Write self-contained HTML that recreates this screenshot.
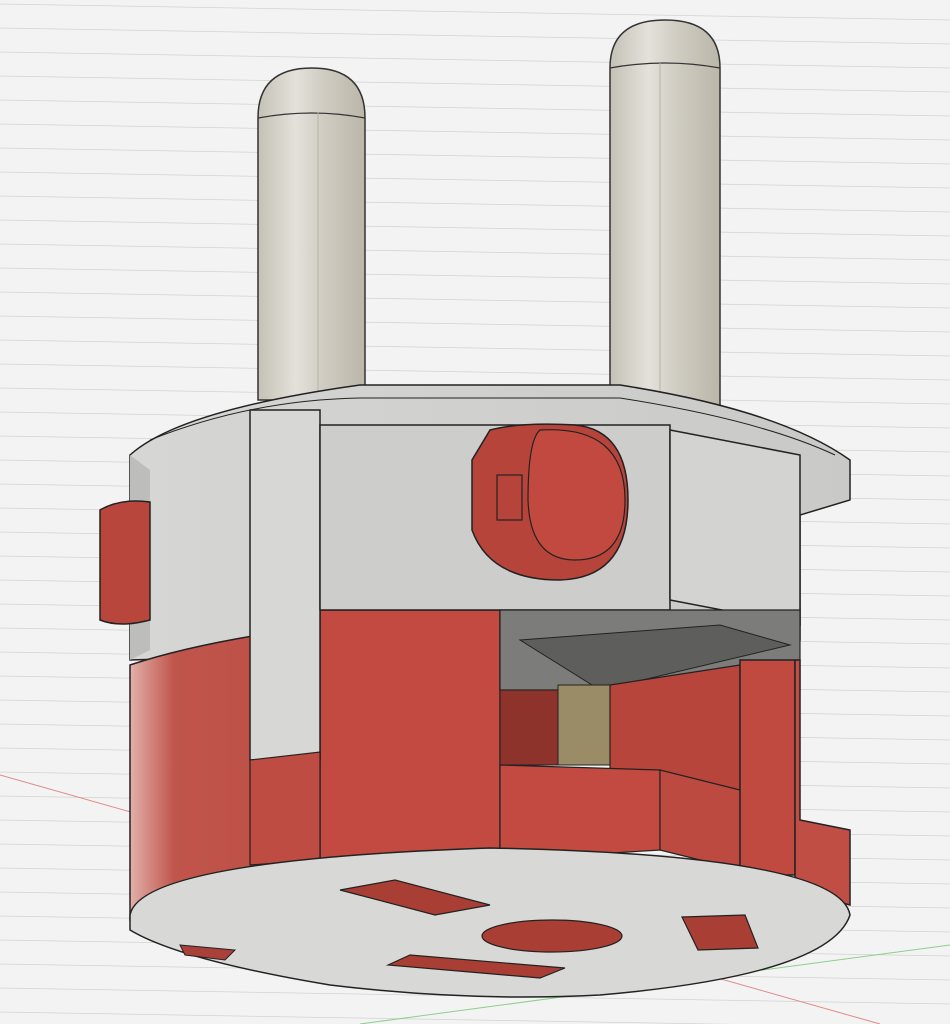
<!DOCTYPE html>
<html><head><meta charset="utf-8"><style>html,body{margin:0;padding:0;background:#f2f2f2}svg{display:block}</style></head>
<body>
<svg width="950" height="1024" viewBox="0 0 950 1024" xmlns="http://www.w3.org/2000/svg">
<defs>
<linearGradient id="pin" x1="0" x2="1"><stop offset="0" stop-color="#c4c1b6"/><stop offset="0.35" stop-color="#e3e1da"/><stop offset="0.6" stop-color="#d0cdc3"/><stop offset="1" stop-color="#bab6a8"/></linearGradient>
<linearGradient id="red" x1="0" x2="1"><stop offset="0" stop-color="#e2b0aa"/><stop offset="0.12" stop-color="#c0554b"/><stop offset="1" stop-color="#b8453c"/></linearGradient>
<linearGradient id="gray" x1="0" x2="1"><stop offset="0" stop-color="#d6d6d4"/><stop offset="1" stop-color="#c9c9c7"/></linearGradient>
<pattern id="lines" width="950" height="24" patternUnits="userSpaceOnUse"><path d="M0 4 L950 20" stroke="#d2d2d2" stroke-width="0.8" fill="none"/></pattern>
</defs>
<rect width="950" height="1024" fill="#f3f3f3"/>
<rect width="950" height="1024" fill="url(#lines)"/>
<line x1="0" y1="775" x2="880" y2="1024" stroke="#e08a8a" stroke-width="1"/>
<line x1="360" y1="1024" x2="950" y2="945" stroke="#8ccf8c" stroke-width="1"/>
<!-- pins -->
<path d="M258 118 Q258 68 312 68 Q365 68 365 118 L365 400 L258 400Z" fill="url(#pin)" stroke="#333" stroke-width="1.5"/>
<path d="M258 118 Q312 108 365 118" fill="none" stroke="#333" stroke-width="1.2"/>
<line x1="318" y1="112" x2="318" y2="395" stroke="#b8b4a6" stroke-width="1"/>
<path d="M610 68 Q610 20 665 20 Q720 20 720 68 L720 415 L610 415Z" fill="url(#pin)" stroke="#333" stroke-width="1.5"/>
<path d="M610 68 Q665 58 720 68" fill="none" stroke="#333" stroke-width="1.2"/>
<line x1="660" y1="63" x2="660" y2="410" stroke="#b8b4a6" stroke-width="1"/>
<!-- upper gray body -->
<path d="M130 455 Q180 410 360 385 L620 385 Q780 410 850 460 L850 500 L800 515 L800 640 L130 660Z" fill="url(#gray)" stroke="#222" stroke-width="1.5"/>
<path d="M150 440 Q250 400 360 398 L620 398 Q760 420 835 455" fill="none" stroke="#222" stroke-width="1"/>
<path d="M130 455 L130 660 L150 650 L150 470Z" fill="#bdbdbb"/>
<!-- red lower body -->
<path d="M130 665 Q250 625 500 610 L500 900 L130 920Z" fill="url(#red)" stroke="#222" stroke-width="1.5"/>
<rect x="320" y="610" width="180" height="250" fill="#c24a40" stroke="#222" stroke-width="1.5"/>
<!-- pillar -->
<rect x="250" y="410" width="70" height="350" fill="#d7d7d5" stroke="#222" stroke-width="1.5"/>
<path d="M250 760 L320 752 L320 860 L250 865Z" fill="#bf4c42" stroke="#222" stroke-width="1.2"/>
<!-- center panel -->
<rect x="320" y="425" width="350" height="185" fill="#cdcdcb" stroke="#222" stroke-width="1.5"/>
<!-- right box -->
<path d="M670 430 L800 455 L800 625 L670 600Z" fill="#d3d3d1" stroke="#222" stroke-width="1.5"/>
<!-- cutout -->
<path d="M500 610 L800 610 L800 690 L500 690Z" fill="#7c7c7a" stroke="#222" stroke-width="1.2"/>
<path d="M520 640 L720 625 L790 645 L600 690Z" fill="#5e5e5c" stroke="#222" stroke-width="1"/>
<rect x="500" y="690" width="60" height="75" fill="#8e332c" stroke="#222" stroke-width="1"/>
<rect x="558" y="685" width="52" height="80" fill="#9a8c66" stroke="#222" stroke-width="1"/>
<path d="M610 685 L740 665 L740 790 L610 770Z" fill="#b8453c" stroke="#222" stroke-width="1.2"/>
<path d="M500 765 L660 770 L660 850 L500 860Z" fill="#c24a40" stroke="#222" stroke-width="1.2"/>
<path d="M660 770 L740 790 L740 870 L660 850Z" fill="#bc4a41" stroke="#222" stroke-width="1.2"/>
<rect x="740" y="660" width="55" height="215" fill="#c04a40" stroke="#222" stroke-width="1.5"/>
<path d="M795 660 L800 660 L800 820 L850 830 L850 905 L795 890Z" fill="#c04e44" stroke="#222" stroke-width="1.5"/>
<!-- buttons -->
<path d="M490 430 Q520 422 575 425 Q628 430 628 500 Q628 578 560 580 Q490 580 472 530 L472 460Z" fill="#b7443b" stroke="#222" stroke-width="1.5"/>
<path d="M540 430 Q625 425 625 500 Q625 560 575 560 Q530 560 528 500 Q528 440 540 430Z" fill="#c2493f" stroke="#222" stroke-width="1.2"/>
<rect x="497" y="475" width="25" height="45" fill="none" stroke="#222" stroke-width="1.2"/>
<path d="M100 510 Q120 498 150 502 L150 620 Q120 628 100 620Z" fill="#b9463d" stroke="#222" stroke-width="1.5"/>
<!-- bottom disc -->
<path d="M130 915 Q140 860 490 848 Q840 855 850 915 Q830 975 600 995 Q470 1002 330 985 Q180 960 130 930Z" fill="#d8d8d6" stroke="#222" stroke-width="1.5"/>
<path d="M180 945 L235 950 L225 960 L185 955Z" fill="#a9403a" stroke="#222"/>
<path d="M340 890 L395 880 L490 905 L435 915Z" fill="#a93e35" stroke="#222" stroke-width="1.2"/>
<ellipse cx="552" cy="936" rx="70" ry="16" fill="#a93e35" stroke="#222" stroke-width="1.2"/>
<path d="M388 965 L410 955 L565 968 L540 978Z" fill="#a93e35" stroke="#222" stroke-width="1.2"/>
<path d="M682 917 L745 915 L758 948 L698 950Z" fill="#a93e35" stroke="#222" stroke-width="1.2"/>
</svg>
</body></html>
